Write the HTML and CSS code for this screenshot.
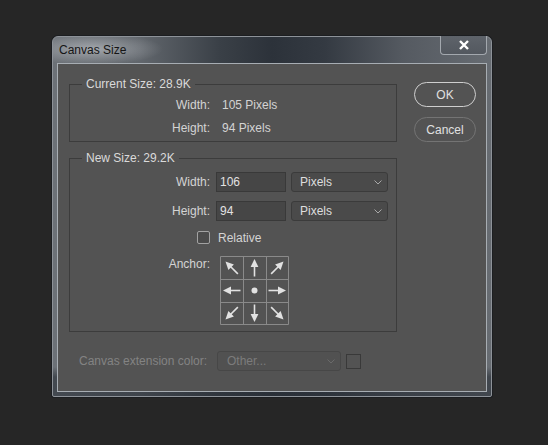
FILE: index.html
```html
<!doctype html>
<html lang="en">
<head>
    <meta charset="UTF-8">
    <title>Canvas Size</title>
    <link rel="stylesheet" href="styles.css">
</head>
<body>
    <div class="window">
        <div class="titlebar">
            <span class="title">Canvas Size</span>
            <button class="close" aria-label="close">
                <svg viewBox="0 0 12 10" width="12" height="10"><path d="M2 1L10 9M10 1L2 9" stroke="#fff" stroke-width="2.4"/></svg>
            </button>
        </div>

        <div class="client">
            <div class="main">
                <fieldset class="group current">
                    <legend>Current Size: 28.9K</legend>
                    <div class="info-row"><span class="label">Width:</span><span>105 Pixels</span></div>
                    <div class="info-row"><span class="label">Height:</span><span>94 Pixels</span></div>
                </fieldset>

                <fieldset class="group new">
                    <legend>New Size: 29.2K</legend>
                    <div class="field-row">
                        <span class="label">Width:</span>
                        <div class="input">106</div>
                        <div class="select">Pixels<svg class="chev" viewBox="0 0 8 5" width="8" height="5"><path d="M0.5 0.5L4 4L7.5 0.5" fill="none" stroke="#a8a8a8"/></svg></div>
                    </div>
                    <div class="field-row second">
                        <span class="label">Height:</span>
                        <div class="input">94</div>
                        <div class="select">Pixels<svg class="chev" viewBox="0 0 8 5" width="8" height="5"><path d="M0.5 0.5L4 4L7.5 0.5" fill="none" stroke="#a8a8a8"/></svg></div>
                    </div>
                    <div class="check-row"><span class="checkbox"></span>Relative</div>
                    <div class="anchor-row">
                        <span class="label">Anchor:</span>
                        <svg class="anchor" viewBox="0 0 69 69" width="69" height="69">
                            <defs>
                                <g id="arrow">
                                    <path d="M11.5 20.5V9" stroke="#e2e2e2" stroke-width="1.6"/>
                                    <path d="M11.5 3L7.6 11H15.4Z" fill="#e2e2e2"/>
                                </g>
                            </defs>
                            <path d="M0.5 0.5H68.5V68.5H0.5ZM23.5 0.5V68.5M46.5 0.5V68.5M0.5 23.5H68.5M0.5 46.5H68.5" fill="none" stroke="#8a8a8a"/>
                            <use href="#arrow" transform="rotate(315 11.5 11.5)"/>
                            <use href="#arrow" transform="translate(23 0)"/>
                            <use href="#arrow" transform="translate(46 0) rotate(45 11.5 11.5)"/>
                            <use href="#arrow" transform="translate(0 23) rotate(270 11.5 11.5)"/>
                            <circle cx="34.5" cy="34.5" r="3" fill="#e2e2e2"/>
                            <use href="#arrow" transform="translate(46 23) rotate(90 11.5 11.5)"/>
                            <use href="#arrow" transform="translate(0 46) rotate(225 11.5 11.5)"/>
                            <use href="#arrow" transform="translate(23 46) rotate(180 11.5 11.5)"/>
                            <use href="#arrow" transform="translate(46 46) rotate(135 11.5 11.5)"/>
                        </svg>
                    </div>
                </fieldset>

                <div class="ext-row">
                    <span class="ext-label">Canvas extension color:</span>
                    <div class="select disabled">Other...<svg class="chev" viewBox="0 0 8 5" width="8" height="5"><path d="M0.5 0.5L4 4L7.5 0.5" fill="none" stroke="#6a6a6a"/></svg></div>
                    <span class="swatch"></span>
                </div>
            </div>

            <div class="side">
                <button class="btn primary">OK</button>
                <button class="btn">Cancel</button>
            </div>
        </div>
    </div>
</body>
</html>
```

FILE: styles.css
```css
:root {
    --cl-desktop: #262626;
    --cl-panel: #535353;
    --cl-text: #d4d4d4;
    --cl-line: #3c3c3c;
    --cl-field: #464646;
    --cl-disabled: #838383;
}

html, body {
    margin: 0;
    padding: 0;
    width: 100%;
    height: 100%;
    overflow: hidden;
}

body {
    background: var(--cl-desktop);
    font-family: "Liberation Sans", Arial, sans-serif;
    font-size: 12px;
    color: var(--cl-text);
    padding: 36px 0 0 52px;
    box-sizing: border-box;
}

.window {
    width: 440px;
    height: 361px;
    box-sizing: border-box;
    border: solid 1px #8d9298;
    border-radius: 6px 6px 2px 2px;
    padding: 0 4px 4px 4px;
    background:
        radial-gradient(ellipse 70px 16px at 40px 12px, rgba(235, 238, 242, 0.45), rgba(235, 238, 242, 0) 100%),
        linear-gradient(180deg, rgba(40, 46, 54, 0) 0, rgba(40, 46, 54, 0) 330px, rgba(40, 46, 54, 0.6) 340px),
        linear-gradient(90deg, #6c7177 0%, #61666c 20%, #3a4047 38%, #2c323a 50%, #343a42 62%, #555a61 80%, #676c72 100%);
    box-shadow: 0 0 0 1px #1c1e21;
    display: flex;
    flex-direction: column;
}

.titlebar {
    height: 26px;
    display: flex;
    align-items: flex-start;
    justify-content: space-between;
}

.title {
    color: #151515;
    padding: 6px 0 0 2px;
    line-height: 14px;
}

.close {
    width: 47px;
    height: 19px;
    margin-top: -1px;
    border: solid 1px #a3a8ae;
    border-top: none;
    border-radius: 0 0 4px 4px;
    background: linear-gradient(#5e636a, #53585f);
    padding: 0;
    display: flex;
    align-items: center;
    justify-content: center;
}

.client {
    flex: 1;
    background: var(--cl-panel);
    border: solid 1px #a7adb3;
    display: flex;
    padding: 12px 0 0 11px;
}

.main {
    width: 328px;
}

.group {
    margin: 0;
    padding: 0;
    border: solid 1px var(--cl-line);
    min-width: 0;
}

.group legend {
    margin-left: 12px;
    padding: 0 4px;
    line-height: 16px;
    color: #dadada;
}

.label {
    width: 140px;
    text-align: right;
    flex-shrink: 0;
}

.current {
    padding: 2px 0 1px 0;
}

.info-row {
    display: flex;
    line-height: 23px;
    gap: 12px;
}

.new {
    margin-top: 8px;
    padding: 6px 0 6px 0;
}

.field-row {
    display: flex;
    align-items: center;
    height: 20px;
}

.field-row.second {
    margin-top: 9px;
}

.field-row .label {
    margin-right: 6px;
}

.input {
    width: 70px;
    height: 20px;
    box-sizing: border-box;
    background: var(--cl-field);
    border: solid 1px #393939;
    padding-left: 3px;
    line-height: 18px;
    color: #e2e2e2;
    margin-right: 5px;
}

.select {
    width: 97px;
    height: 20px;
    box-sizing: border-box;
    background: #4a4a4a;
    border: solid 1px #3b3b3b;
    border-radius: 3px;
    padding: 0 5px 0 8px;
    line-height: 18px;
    display: flex;
    align-items: center;
    justify-content: space-between;
    color: #dedede;
}

.check-row {
    display: flex;
    align-items: center;
    height: 17px;
    margin-top: 8px;
    padding-left: 127px;
    gap: 8px;
}

.checkbox {
    width: 11px;
    height: 11px;
    border: solid 1px #a2a2a2;
    border-radius: 2px;
    background: #4b4b4b;
}

.anchor-row {
    display: flex;
    align-items: flex-start;
    margin-top: 10px;
}

.anchor-row .label {
    line-height: 16px;
}

.anchor {
    display: block;
    margin-left: 10px;
}

.ext-row {
    display: flex;
    align-items: center;
    margin-top: 19px;
    padding-left: 10px;
    height: 20px;
}

.ext-label {
    color: var(--cl-disabled);
    width: 132px;
    margin-right: 6px;
}

.select.disabled {
    width: 124px;
    padding-left: 9px;
    background: #515151;
    border-color: #474747;
    color: #7c7c7c;
}

.swatch {
    width: 15px;
    height: 15px;
    box-sizing: border-box;
    margin-left: 5px;
    border: solid 1px #393939;
    background: #535353;
}

.side {
    display: flex;
    flex-direction: column;
    gap: 10px;
    margin: 6px 0 0 17px;
}

.btn {
    width: 62px;
    height: 25px;
    border-radius: 13px;
    border: solid 1px #747474;
    background: transparent;
    color: #e0e0e0;
    font-family: inherit;
    font-size: 12px;
    padding: 0;
}

.btn.primary {
    border: solid 1.5px #cfcfcf;
}
```
